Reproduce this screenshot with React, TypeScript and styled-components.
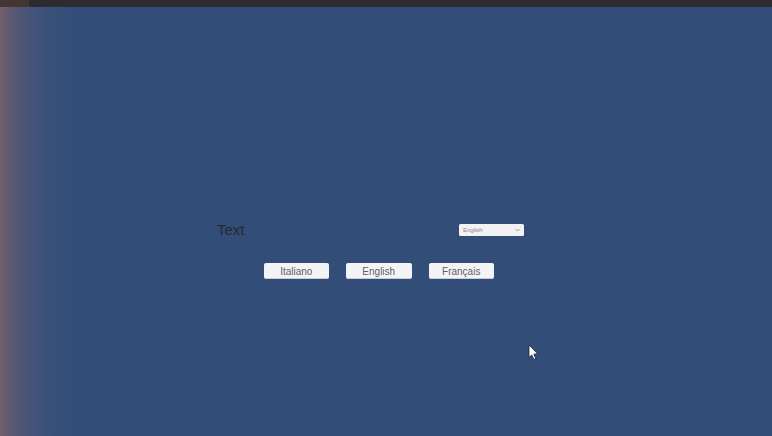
import { createGlobalStyle } from "styled-components";
import styled from "styled-components";

const GlobalStyle = createGlobalStyle`
  html, body {
    margin: 0;
    padding: 0;
    height: 100%;
    overflow: hidden;
    font-family: "Liberation Sans", Arial, sans-serif;
  }
`;

const Window = styled.div`
  position: relative;
  display: flex;
  flex-direction: column;
  width: 772px;
  height: 436px;
  overflow: hidden;
`;

const TopBar = styled.div`
  display: flex;
  flex: 0 0 7px;
  background: #2c2b2d;
`;

const TopBarTab = styled.div`
  width: 29px;
  background: #43352f;
`;

const Stage = styled.div`
  flex: 1;
  display: flex;
  flex-direction: column;
  padding: 217px 0 0 217px;
  background: linear-gradient(
    90deg,
    #76606a 0px,
    #615a6f 8px,
    #525774 18px,
    #475379 30px,
    #3d5179 44px,
    #365079 58px,
    #324d78 76px
  );
`;

const TopRow = styled.div`
  display: flex;
  align-items: center;
  height: 13px;
`;

const Title = styled.div`
  width: 242px;
  margin-bottom: 2px;
  font-size: 15px;
  line-height: 13px;
  color: #262a30;
`;

const Dropdown = styled.div`
  display: flex;
  align-items: center;
  justify-content: space-between;
  box-sizing: border-box;
  width: 65px;
  height: 12px;
  margin-top: -1px;
  padding: 0 4px;
  background: #f2f2f4;
  border-radius: 1.5px;
  font-size: 6px;
  color: #85878b;
`;

const Chevron = styled.svg`
  width: 5px;
  height: 4px;
`;

const ButtonRow = styled.div`
  display: flex;
  gap: 17px;
  margin: 26px 0 0 46.5px;
`;

const LangButton = styled.button`
  box-sizing: border-box;
  width: 65.5px;
  height: 16px;
  padding: 2px 0 0;
  border: none;
  border-bottom: 1px solid #c9cbd0;
  border-radius: 2px;
  background: #f4f4f6;
  font-family: inherit;
  font-size: 10px;
  line-height: 13px;
  color: #5c5e63;
`;

const Cursor = styled.svg`
  position: absolute;
  left: 528px;
  top: 344px;
  width: 11px;
  height: 16px;
`;

export default function App() {
  return (
    <Window>
      <GlobalStyle />
      <TopBar>
        <TopBarTab />
      </TopBar>
      <Stage>
        <TopRow>
          <Title>Text</Title>
          <Dropdown>
            English
            <Chevron viewBox="0 0 5 4">
              <path d="M0.5 1 L2.5 3 L4.5 1" fill="none" stroke="#8a8c90" strokeWidth="0.8" />
            </Chevron>
          </Dropdown>
        </TopRow>
        <ButtonRow>
          <LangButton>Italiano</LangButton>
          <LangButton>English</LangButton>
          <LangButton>Français</LangButton>
        </ButtonRow>
      </Stage>
      <Cursor viewBox="0 0 11 16">
        <path d="M1 1 L1 13.4 L3.8 11 L5.8 15.4 L7.8 14.4 L5.8 10.2 L9.6 9.8 Z" fill="#fff" stroke="#1c2430" strokeWidth="0.8" />
      </Cursor>
    </Window>
  );
}
